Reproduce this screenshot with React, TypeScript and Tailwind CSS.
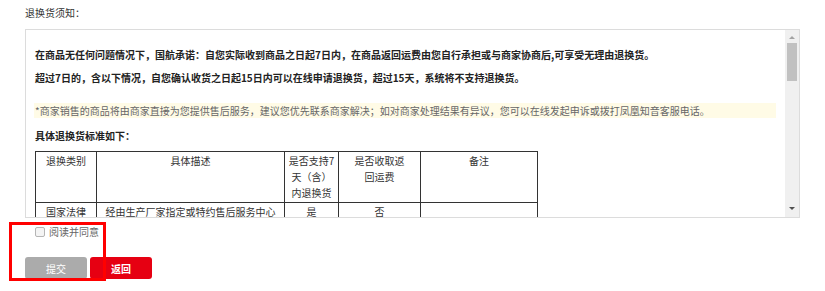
import React from "react";

const font = "font-['Microsoft_YaHei','Noto_Sans_CJK_SC',sans-serif]";

function ScrollBar() {
  return (
    <div className="flex w-[14px] shrink-0 flex-col items-center bg-[#f0f0f0]">
      <div className="mt-[6px] h-0 w-0 border-x-[3px] border-b-[3px] border-x-transparent border-b-[#a3a3a3]" />
      <div className="mt-[4px] h-[38px] w-[10px] bg-[#c1c1c1]" />
      <div className="flex-1" />
      <div className="mb-[7px] h-0 w-0 border-x-[3px] border-t-[3px] border-x-transparent border-t-[#505050]" />
    </div>
  );
}

const th = "border border-[#333] px-0 py-px text-center align-top font-normal";

function RulesTable() {
  return (
    <table className="mt-[8px] w-[503px] table-fixed border-collapse text-[10px] leading-[16px] text-[#333]">
      <colgroup>
        <col className="w-[61px]" />
        <col className="w-[188px]" />
        <col className="w-[54px]" />
        <col className="w-[82px]" />
        <col className="w-[117px]" />
      </colgroup>
      <thead>
        <tr>
          <th className={th}>退换类别</th>
          <th className={th}>具体描述</th>
          <th className={th}>是否支持7<br />天（含）<br />内退换货</th>
          <th className={th}>是否收取返<br />回运费</th>
          <th className={th}>备注</th>
        </tr>
      </thead>
      <tbody>
        <tr>
          <td className={th}>国家法律</td>
          <td className={th}>经由生产厂家指定或特约售后服务中心</td>
          <td className={th}>是</td>
          <td className={th}>否</td>
          <td className={th}></td>
        </tr>
      </tbody>
    </table>
  );
}

export default function App() {
  return (
    <div className={`relative h-[291px] w-[825px] overflow-hidden bg-white text-[10px] text-[#222] ${font}`}>
      <div className="pl-[25px] pt-[6px] leading-[14px] text-[#333]">退换货须知：</div>

      <div className="ml-[25px] mt-[9px] flex h-[189px] w-[775px] border border-[#dcdcdc]">
        <div className="flex-1 overflow-hidden pl-[9px]">
          <p className="mt-[18px] whitespace-nowrap font-bold leading-[14px]">
            在商品无任何问题情况下，国航承诺：自您实际收到商品之日起7日内，在商品返回运费由您自行承担或与商家协商后,可享受无理由退换货。
          </p>
          <p className="mt-[9px] whitespace-nowrap font-bold leading-[14px]">
            超过7日的，含以下情况，自您确认收货之日起15日内可以在线申请退换货，超过15天，系统将不支持退换货。
          </p>
          <p className="-ml-px mt-[18px] w-[742px] whitespace-nowrap bg-[#fffbe6] pl-px leading-[15px] text-[#666]">
            *商家销售的商品将由商家直接为您提供售后服务，建议您优先联系商家解决；如对商家处理结果有异议，您可以在线发起申诉或拨打凤凰知音客服电话。
          </p>
          <p className="mt-[11px] font-bold leading-[14px]">具体退换货标准如下：</p>
          <RulesTable />
        </div>
        <ScrollBar />
      </div>

      <label className="ml-[35px] mt-[7px] flex items-center gap-[4px] leading-[14px] text-[#666]">
        <span className="h-[10px] w-[10px] rounded-[2px] border border-[#b5b5b5] bg-[#f4f4f4]" />
        阅读并同意
      </label>

      <div className="ml-[25px] mt-[18px] flex gap-[3px]">
        <button className="h-[22px] w-[62px] rounded-[3px] bg-[#ababab] text-white">提交</button>
        <button className="h-[22px] w-[62px] rounded-[3px] bg-[#e60012] font-bold text-white">返回</button>
      </div>

      <div className="absolute left-[9px] top-[222px] h-[59px] w-[97px] border-[3px] border-[#ff0000]" />
    </div>
  );
}
